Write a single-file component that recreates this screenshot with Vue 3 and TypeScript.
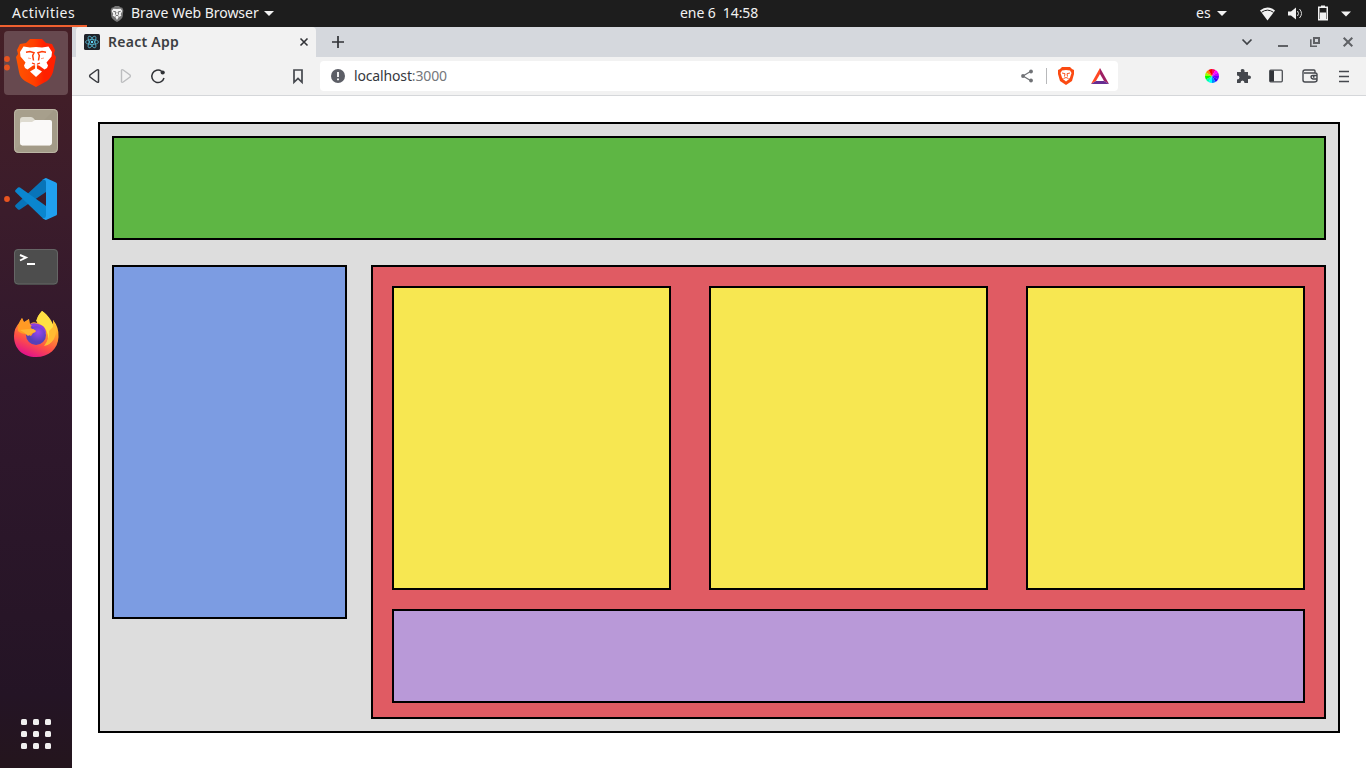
<script setup lang="ts">
const columns: number[] = [1, 2, 3]
const dots: number[] = [0, 1, 2, 3, 4, 5, 6, 7, 8]
const wheel: string[] = ['#f06', '#f0f', '#b0f', '#60f', '#30f', '#08f', '#0ff', '#0fa', '#0f0', '#9f0', '#f80', '#f00']
const slice = (i: number): string => {
  const a = (i * Math.PI) / 6 - Math.PI / 2
  const b = a + Math.PI / 6
  return `M7 7L${7 + 7 * Math.cos(a)} ${7 + 7 * Math.sin(a)}A7 7 0 0 1 ${7 + 7 * Math.cos(b)} ${7 + 7 * Math.sin(b)}Z`
}
</script>

<template>
  <div class="desktop">
    <header class="topbar">
      <div class="activities"><span class="t-act">Activities</span></div>
      <svg class="appicon" width="14" height="16" viewBox="0 0 40 48">
        <path d="M10 4 14 0H26L30 4 36 5 39 13 37 32Q35 39 20 48Q5 39 3 32L1 13 4 5Z" fill="#777" />
        <path d="M9 8 20 9 31 8 36 15 31 24 33 29 25 33 20 42 15 33 7 29 9 24 4 15Z" fill="#f4f4f4" />
        <path d="M9 16 17 18 15 26M31 16 23 18 25 26M15 31 20 27 25 31" fill="none" stroke="#666" stroke-width="3" />
      </svg>
      <span class="t-brave">Brave Web Browser</span>
      <i class="caret c1"></i>
      <span class="t-clock">ene 6&nbsp; 14:58</span>
      <span class="t-es">es</span>
      <i class="caret c2"></i>
      <svg class="status" width="100" height="20" viewBox="0 0 100 20">
        <path d="M2 6.500Q9.500 0.500 17 6.500L9.500 16.500Z" fill="#f2f2f2" />
        <path d="M3.500 8.300Q9.500 4 15.500 8.300" fill="none" stroke="#1d1d1d" stroke-width="1" />
        <path d="M30 7.500H33L38 3.500V15.500L33 11.500H30Z" fill="#f2f2f2" />
        <path d="M39.500 7Q41.500 9.500 39.500 12M41.500 5Q45.500 9.500 41.500 14" fill="none" stroke="#ddd" stroke-width="1" />
        <path d="M60.750 3.200H69.250V15.800H60.750Z" fill="none" stroke="#f2f2f2" stroke-width="1.500" />
        <path d="M63 1.500H67V3.500H63ZM62 8.500H68V15H62Z" fill="#f2f2f2" />
        <path d="M83 7.500H93L88 12.500Z" fill="#f2f2f2" />
      </svg>
    </header>

    <div class="workspace">
      <nav class="dock">
        <div class="tile active">
          <svg width="64" height="64" viewBox="0 0 64 64">
            <defs>
              <linearGradient id="brave"><stop offset="0" stop-color="#ff5500" /><stop offset=".45" stop-color="#ff4000" /><stop offset=".7" stop-color="#ff2000" /></linearGradient>
            </defs>
            <path d="M22 12 26 8H38L42 12 48 13 51 19 50 23 52 26 49 41Q47 47 43 50L32 56 21 50Q16 47 15 41L12 26 14 23 13 19 16 13Z" fill="url(#brave)" />
            <path d="M19.500 15.500 26 16.500 32 16 38 16.500 44.500 15.500 48 21 47.500 25.500 42.500 31.500 44 34.500 43 37 40.500 38.500 35 34.500 32 34 29 34.500 23.500 38.500 21 37 20 34.500 21.500 31.500 16.500 25.500 16 21Z" fill="#fff" />
            <path d="M22 21.300 26 20.600 30 21.800 28.700 24.500 29.500 29.500M42 21.300 38 20.600 34 21.800 35.300 24.500 34.500 29.500" fill="none" stroke="#ff3d08" stroke-width="1.500" />
            <path d="M24 27 27 27.700M40 27 37 27.700" fill="none" stroke="#ff3d08" stroke-width="1" opacity=".5" />
            <path d="M28 32 32 33.500 36 32" fill="none" stroke="#ff3000" stroke-width="1.200" />
            <path d="M32 32V38" stroke="#fff" stroke-width="1.800" />
            <path d="M32 37 38 40.500 32 46 26 40.500Z" fill="#fff" />
          </svg>
        </div>
        <div class="tile">
          <svg width="64" height="64" viewBox="0 0 64 64">
            <rect x="10" y="10" width="44" height="44" rx="4.500" fill="#a39b88" />
            <path d="M11 51V14Q11 11 14 11H50Z" fill="#a79f8c" />
            <rect x="10.500" y="10.500" width="43" height="43" rx="4" fill="none" stroke="#bbb5a4" />
            <path d="M16 29V21Q16 18 19 18H27Q29 18 31 21V29Z" fill="#dedbd0" />
            <path d="M16 44V25Q16 23 18 23H28L31 21H46Q48 21 48 23V43.500Q48 46.500 45 46.500H19Q16 46.500 16 44Z" fill="#faf9f8" />
            <path d="M18 46.500H46" stroke="#d5d0c6" />
          </svg>
        </div>
        <div class="tile">
          <svg width="64" height="64" viewBox="0 0 64 64">
            <path d="M42 11V25L16 42.500Q15 43.200 14 42.500L11.500 40Q10.500 39 11.500 38L39 12.500Z" fill="#0874b9" />
            <path d="M42 53V39L16 20.500Q15 19.800 14 20.500L11.500 23Q10.500 24 11.500 25L39 51.500Z" fill="#0a86cf" />
            <path d="M42 11 52 15.500Q53 16 53 17V47Q53 48 52 48.500L42 53 38 51Q42 52 42 48V15Q42 12 38 13Z" fill="#20a0ef" />
          </svg>
        </div>
        <div class="tile">
          <svg width="64" height="64" viewBox="0 0 64 64">
            <rect x="10" y="14" width="44" height="36" rx="4" fill="#343434" />
            <rect x="10.500" y="14.500" width="43" height="34.500" rx="3.500" fill="#4d4d4d" stroke="#666" />
            <path d="M16 20 22 22.500 16 25.500M23 29H31" fill="none" stroke="#fff" stroke-width="1.900" />
          </svg>
        </div>
        <div class="tile">
          <svg width="64" height="64" viewBox="0 0 64 64">
            <defs>
              <linearGradient id="fox" x1=".8" y1=".05" x2=".4" y2="1"><stop offset="0" stop-color="#fff044" /><stop offset=".35" stop-color="#ffa52c" /><stop offset=".7" stop-color="#ff5145" /><stop offset="1" stop-color="#e31587" /></linearGradient>
              <radialGradient id="orb" cx=".6" cy=".35"><stop offset="0" stop-color="#9846f0" /><stop offset="1" stop-color="#5640b8" /></radialGradient>
            </defs>
            <path d="M38 8C42 11 46 15 47 20L49 22 49 17Q55 24 54.500 34C54 46 45 54 32 54S10 46 10 33Q10 25 16 19L18 15 20 19 25 16 26 21Q29 18 33 20Q32 14 38 8Z" fill="url(#fox)" />
            <path d="M38 8C44 12 48 18 50 24Q53 36 43 42Q46 30 40 24L32 18Q34 12 38 8Z" fill="#ffe043" />
            <path d="M49 17Q55 26 50 36Q46 42 40 43Q46 35 45 28L49 24Z" fill="#ffbb32" />
            <circle cx="32" cy="32" r="10" fill="url(#orb)" />
            <path d="M26 21Q31 19 37 22Q42 24 42 31L39 26Q34 22 29 24Z" fill="#8b3ee0" />
            <path d="M18 15Q13 21 14 28Q17 31 22 31L27 33Q28 30 32 28Q30 26 28 26L25 22V16L20 20Z" fill="#ff9a24" />
            <path d="M16 27Q22 26 29 26L32 28Q31 30 28 30L24 33Q20 29 16 27Z" fill="#ffb432" />
          </svg>
        </div>
        <svg class="running" width="12" height="190" viewBox="0 0 12 190">
          <g fill="#e95420"><circle cx="7" cy="32" r="2.900" /><circle cx="7" cy="40.500" r="2.900" /><circle cx="7" cy="172" r="2.900" /></g>
        </svg>
        <div class="grid-dots"><i v-for="d in dots" :key="d"></i></div>
      </nav>

      <section class="browser">
        <div class="tabs">
          <div class="tab">
            <svg width="16" height="16" viewBox="0 0 16 16">
              <rect width="16" height="16" rx="1.500" fill="#20232a" />
              <g fill="none" stroke="#55b5d0" stroke-width=".8"><ellipse cx="8" cy="8" rx="6.500" ry="2.500" /><ellipse cx="8" cy="8" rx="6.500" ry="2.500" transform="rotate(60 8 8)" /><ellipse cx="8" cy="8" rx="6.500" ry="2.500" transform="rotate(120 8 8)" /></g>
              <circle cx="8" cy="8" r="1.200" fill="#61dafb" />
            </svg>
            <span class="t-tab">React App</span>
            <svg class="tabclose" width="10" height="10" viewBox="0 0 10 10"><path d="M1.500 1.500 8.500 8.500M8.500 1.500 1.500 8.500" stroke="#333438" stroke-width="1.600" /></svg>
          </div>
          <svg class="plus" width="12" height="12" viewBox="0 0 12 12"><path d="M6 0V12M0 6H12" stroke="#303236" stroke-width="1.700" /></svg>
          <svg class="wincontrols" width="120" height="20" viewBox="0 0 120 20">
            <path d="M6.500 7.500 11 12 15.500 7.500" fill="none" stroke="#3f4246" stroke-width="1.700" />
            <path d="M42 14H52" stroke="#5f6165" stroke-width="2" />
            <path d="M78 6H83V11H78Z" fill="none" stroke="#5f6165" stroke-width="2" />
            <path d="M74.800 7.300V14.300H81" fill="none" stroke="#5f6165" stroke-width="1.600" />
            <path d="M107.700 5.700 116.300 14.300M116.300 5.700 107.700 14.300" stroke="#5f6165" stroke-width="2" />
          </svg>
        </div>
        <div class="toolbar">
          <svg class="nav" width="240" height="38" viewBox="0 0 240 38">
            <path d="M26.500 13.200V24.800Q26 25.800 24.800 25L18 20Q17.200 19 18 18L24.800 13Q26 12.200 26.500 13.200Z" fill="none" stroke="#37393e" stroke-width="1.500" />
            <path d="M49.500 13.200V24.800Q50 25.800 51.200 25L58 20Q58.800 19 58 18L51.200 13Q50 12.200 49.500 13.200Z" fill="none" stroke="#bcbdbf" stroke-width="1.400" />
            <path d="M89.500 14.200A6.200 6.200 0 1 0 92 21" fill="none" stroke="#303236" stroke-width="1.500" />
            <circle cx="90.700" cy="15.500" r="2.100" fill="#303236" />
            <path d="M222 13H230V25.300L226 21.500 222 25.300Z" fill="none" stroke="#45484e" stroke-width="1.700" />
          </svg>
          <div class="address">
            <svg width="14" height="14" viewBox="0 0 14 14"><circle cx="7" cy="7" r="7" fill="#5c5e66" /><path d="M7 3V8M7 9.500V11.300" stroke="#fff" stroke-width="1.800" /></svg>
            <span class="t-url">localhost<span>:3000</span></span>
            <svg class="addicons" width="100" height="30" viewBox="0 0 100 30">
              <g fill="#707276"><path d="M18.500 10.500 11 15 18.500 19.500" fill="none" stroke="#707276" stroke-width="1.200" /><circle cx="19" cy="10.500" r="1.900" /><circle cx="11" cy="15" r="1.900" /><circle cx="19" cy="19.500" r="1.900" /></g>
              <path d="M34.500 7V23" stroke="#b8b9bb" />
              <path d="M50 6H58L60 8 62 9V13L60 20 54 24 48 20 46 13V9L48 8Z" fill="#fb4a12" />
              <path d="M50 9.500 54 9 58 9.500 59.500 12 58 16.500 56.500 18.500 54 20.500 51.500 18.500 50 16.500 48.500 12Z" fill="#fff" />
              <path d="M50 12 53 12.700 52.500 15.500M58 12 55 12.700 55.500 15.500M51.500 17.500 54 16.500 56.500 17.500" fill="none" stroke="#fb5522" stroke-width="1" />
              <path d="M88 7 79 23 84 20 88 13Z" fill="#ff4724" />
              <path d="M88 7 97 23 92 20 88 13Z" fill="#9e1f63" />
              <path d="M79 23H97L92 20H84Z" fill="#662d91" />
            </svg>
          </div>
          <svg class="extensions" width="160" height="30" viewBox="0 0 160 30">
            <g transform="translate(5 8)"><path v-for="(color, i) in wheel" :key="i" :d="slice(i)" :fill="color" /></g>
            <path d="M37 11H41Q40 8 42.500 8T44.500 11H48V14.500Q51 14 51 16.200T48 18V22H44.500Q44.500 19.500 42.500 19.500T40.500 22H37V18.500Q39.500 18.500 39.500 16.500T37 14.500Z" fill="#44474d" />
            <rect x="69.700" y="9.200" width="12.600" height="11.600" rx="1" fill="none" stroke="#4a4d52" stroke-width="1.300" /><path d="M70 9.500H74V20.500H70Z" fill="#303338" />
            <path d="M115 12V10Q115 9 114 9H105Q103 9 103 11V19Q103 21 105 21H114Q117 21 117 19V13Q117 12 115 12H104M117 14.500H113Q111 14.500 111 16T113 18H117M113 16H114.500" fill="none" stroke="#45484e" stroke-width="1.400" />
            <path d="M139 10.500H149M139 15.500H149M139 20.500H149" stroke="#45484e" stroke-width="1.500" />
          </svg>
        </div>
        <main class="page">
          <div class="container">
            <div class="box header"></div>
            <div class="row">
              <div class="box sidebar"></div>
              <div class="box content">
                <div class="cards"><div v-for="c in columns" :key="c" class="box card"></div></div>
                <div class="box footer"></div>
              </div>
            </div>
          </div>
        </main>
      </section>
    </div>
  </div>
</template>

<style>
body { margin: 0; overflow: hidden; }
</style>

<style scoped>
* { box-sizing: border-box; }
svg { display: block; flex: none; }
.desktop { width: 1366px; height: 768px; display: flex; flex-direction: column; font-family: "Noto Sans", "Open Sans", sans-serif; overflow: hidden; }
.topbar { height: 27px; flex: none; background: #1d1d1d; color: #f2f2f2; display: flex; align-items: center; font-size: 14px; white-space: pre; }
.topbar span { line-height: 18px; padding-bottom: 1px; }
.activities { width: 87px; height: 27px; border-bottom: 2px solid #f0602f; padding: 2px 0 0 12px; display: flex; align-items: center; }
.t-act { letter-spacing: .48px; }
.appicon { margin-left: 23px; }
.t-brave { margin-left: 7px; width: 127px; letter-spacing: -.03px; }
.caret { width: 10px; height: 5px; background: #f2f2f2; clip-path: polygon(0 0, 100% 0, 50% 100%); }
.c1 { margin-left: 6px; }
.t-clock { margin-left: 406px; width: 80px; letter-spacing: -.08px; }
.t-es { margin-left: 436px; width: 15px; }
.c2 { margin-left: 6px; }
.status { margin-left: 31px; }
.workspace { flex: 1; display: flex; min-height: 0; }
.dock { position: relative; width: 72px; padding: 4px; display: flex; flex-direction: column; gap: 4px; background: linear-gradient(#451f26, #3b1c2b 25%, #30182d 48%, #241425 90%, #24151d); }
.tile { width: 64px; height: 64px; border-radius: 4px; flex: none; }
.active { background: #67494f; }
.running { position: absolute; left: 0; top: 0; }
.grid-dots { display: grid; grid-template-columns: repeat(3, 6px); gap: 6px; margin: auto 0 15px 17px; }
.grid-dots i { width: 6px; height: 6px; border-radius: 1.500px; background: #f0efef; }
.browser { width: 1294px; display: flex; flex-direction: column; }
.tabs { height: 30px; background: #d5d8dd; display: flex; align-items: center; padding-left: 4px; }
.tab { width: 240px; height: 30px; background: #f2f2f2; border-radius: 4px 4px 0 0; display: flex; align-items: center; padding: 0 7px 0 8px; }
.t-tab { margin-left: 8px; padding-bottom: 2px; font-size: 14px; font-weight: 600; letter-spacing: .27px; color: #3c3e42; white-space: nowrap; }
.tabclose { margin-left: auto; }
.plus { margin-left: 16px; }
.wincontrols { margin-left: auto; margin-right: 10px; }
.toolbar { height: 39px; background: #f2f2f2; border-bottom: 1px solid #d5d7da; display: flex; align-items: center; }
.nav { margin-right: 8px; }
.address { width: 798px; height: 30px; background: #fff; border-radius: 4px; display: flex; align-items: center; padding-left: 11px; }
.t-url { margin-left: 9px; padding-bottom: 2px; font-size: 14px; letter-spacing: -.15px; color: #36383d; white-space: nowrap; }
.t-url span { color: #75777b; }
.addicons { margin-left: auto; margin-right: 6px; }
.extensions { margin-left: 82px; }
.page { flex: 1; background: #fff; padding: 26px; min-height: 0; }
.container { width: 1242px; height: 611px; border: 2px solid #000; background: #ddd; padding: 12px; }
.box { border: 2px solid #000; }
.header { height: 104px; background: #5eb644; }
.row { display: flex; align-items: flex-start; justify-content: space-between; margin-top: 25px; }
.sidebar { width: 235px; height: 354px; background: #7c9ce2; }
.content { width: 955px; height: 454px; background: #e05b63; padding: 19px; }
.cards { display: grid; grid-template-columns: repeat(3, 279px); gap: 38px; }
.card { height: 304px; background: #f7e751; }
.footer { width: 913px; height: 94px; margin-top: 19px; background: #b999d8; }
</style>
